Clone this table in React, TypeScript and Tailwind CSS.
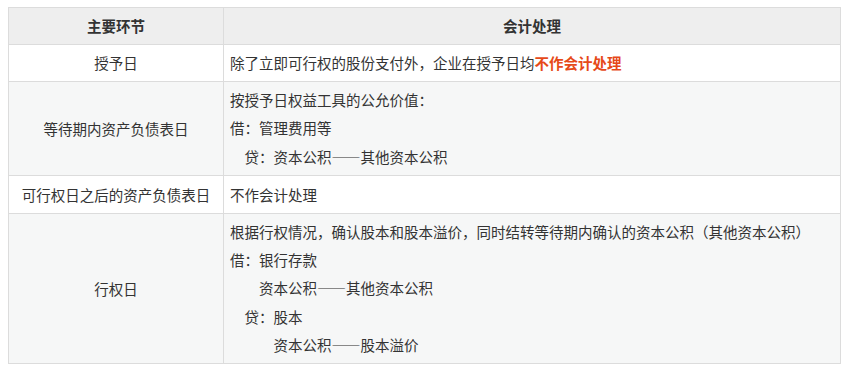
import React from "react";

const font = { fontFamily: '"Noto Sans CJK SC", "Noto Sans", sans-serif' };

function Lines({ lines }: { lines: React.ReactNode[] }) {
  return (
    <div className="flex flex-col">
      {lines.map((l, i) => (
        <div key={i} className="h-[28.3px] leading-[28px] whitespace-nowrap">
          {l}
        </div>
      ))}
    </div>
  );
}

export default function App() {
  const td1 = "border border-[#dcdcdc] text-center align-middle px-[6px] py-[4px]";
  const td2 = "border border-[#dcdcdc] text-left align-middle px-[6px] py-[4px]";
  return (
    <div
      lang="zh-CN"
      className="w-[853px] h-[371px] bg-white pt-[7px] pl-[8px] [text-spacing-trim:space-all] [font-feature-settings:'fwid']"
      style={font}
    >
      <table className="w-[833px] border-collapse text-[14.5px] text-[#333333] table-fixed">
        <colgroup>
          <col className="w-[215px]" />
          <col />
        </colgroup>
        <tbody>
          <tr className="bg-[#eeeeee] h-[37px]">
            <td className={td1 + " font-bold"}>主要环节</td>
            <td className={td1 + " font-bold"}>会计处理</td>
          </tr>
          <tr className="bg-white h-[37px]">
            <td className={td1}>授予日</td>
            <td className={td2}>
              除了立即可行权的股份支付外，企业在授予日均
              <span className="text-[#e64a19] font-bold">不作会计处理</span>
            </td>
          </tr>
          <tr className="bg-[#f6f7f7] h-[93px]">
            <td className={td1}>等待期内资产负债表日</td>
            <td className={td2}>
              <Lines
                lines={[
                  "按授予日权益工具的公允价值：",
                  "借：管理费用等",
                  "\u3000贷：资本公积——其他资本公积",
                ]}
              />
            </td>
          </tr>
          <tr className="bg-white h-[38px]">
            <td className={td1}>可行权日之后的资产负债表日</td>
            <td className={td2}>不作会计处理</td>
          </tr>
          <tr className="bg-[#f6f7f7] h-[148px]">
            <td className={td1}>行权日</td>
            <td className={td2}>
              <Lines
                lines={[
                  "根据行权情况，确认股本和股本溢价，同时结转等待期内确认的资本公积（其他资本公积）",
                  "借：银行存款",
                  "\u3000\u3000资本公积——其他资本公积",
                  "\u3000贷：股本",
                  "\u3000\u3000\u3000资本公积——股本溢价",
                ]}
              />
            </td>
          </tr>
        </tbody>
      </table>
    </div>
  );
}
